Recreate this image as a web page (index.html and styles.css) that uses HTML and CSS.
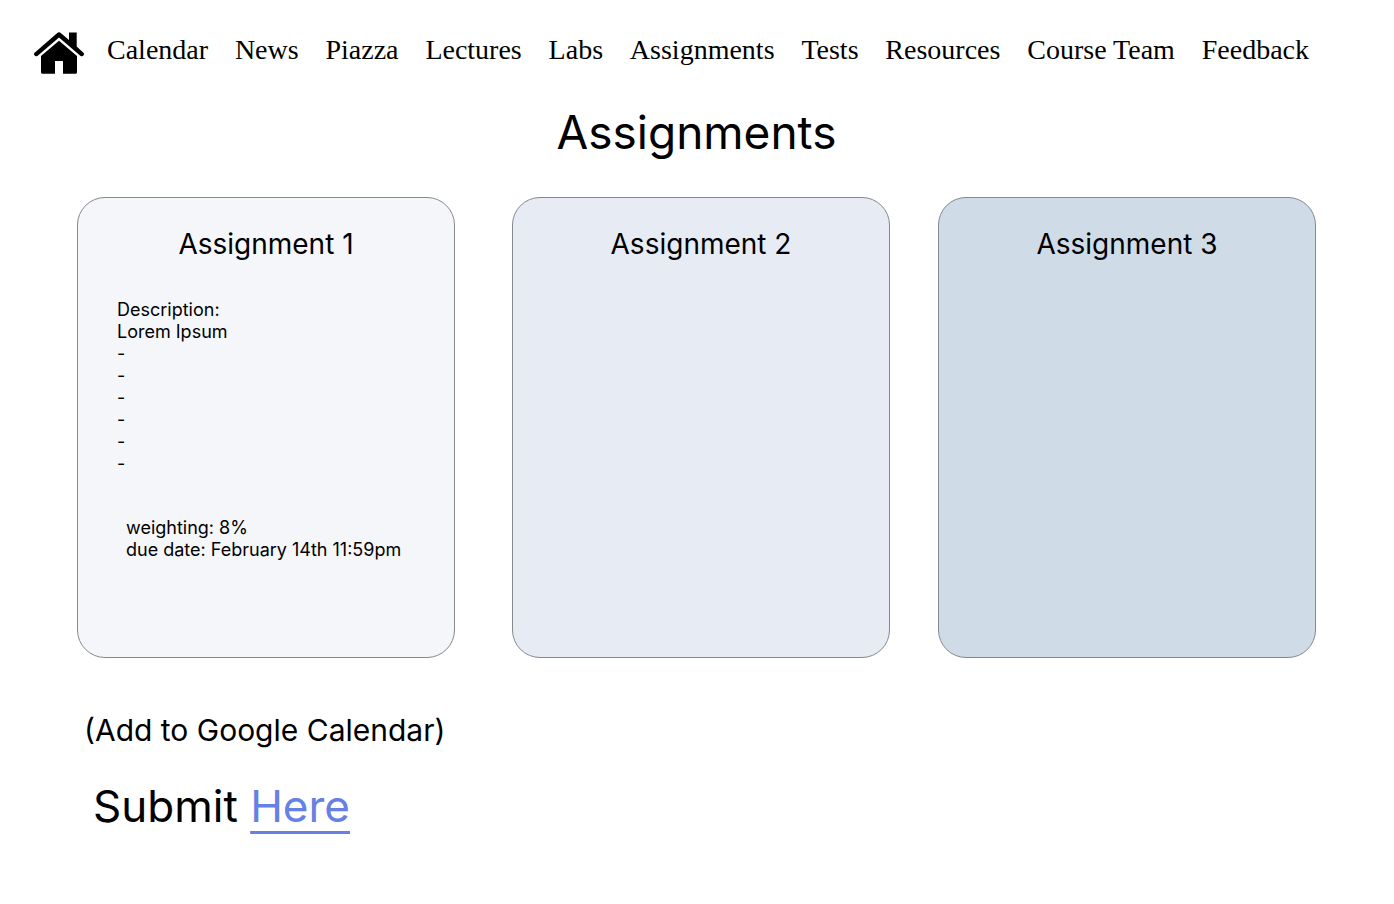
FILE: index.html
```html
<!DOCTYPE html>
<html lang="en">
<head>
<meta charset="utf-8">
<meta name="viewport" content="width=device-width, initial-scale=1">
<title>Assignments</title>
<link rel="stylesheet" href="styles.css">
</head>
<body>
<header class="site-header">
  <a class="home" href="#" aria-label="Home">
    <svg class="home-icon" viewBox="0 0 50 42" aria-hidden="true">
      <path d="M25 8.800 43 24v16.200q0 1.500-1.500 1.500H29V29h-8v12.700H8.500Q7 41.700 7 40.200V24z"/>
      <path d="M.600 20.800 23 1.200Q25-.600 27 1.200L35 8V.400h7.700v14.200l6.700 6.200q1.200 1.200.200 2.400-1.400 1.800-3 .700L25 5.600 3.400 23.900q-1.600 1.100-3-.700-1-1.200.200-2.400z"/>
    </svg>
  </a>
  <nav class="nav">
    <a href="#">Calendar</a>
    <a href="#">News</a>
    <a href="#">Piazza</a>
    <a href="#">Lectures</a>
    <a href="#">Labs</a>
    <a href="#">Assignments</a>
    <a href="#">Tests</a>
    <a href="#">Resources</a>
    <a href="#">Course Team</a>
    <a href="#">Feedback</a>
  </nav>
</header>
<main class="main">
  <h1 class="page-title">Assignments</h1>
  <div class="cards">
    <section class="card card-first">
      <h2 class="card-title">Assignment 1</h2>
      <div class="description">
        <p>Description:</p>
        <p>Lorem Ipsum</p>
        <p>-</p>
        <p>-</p>
        <p>-</p>
        <p>-</p>
        <p>-</p>
        <p>-</p>
      </div>
      <div class="details">
        <p>weighting: 8%</p>
        <p>due date: February 14th 11:59pm</p>
      </div>
    </section>
    <section class="card card-second">
      <h2 class="card-title">Assignment 2</h2>
    </section>
    <section class="card card-third">
      <h2 class="card-title">Assignment 3</h2>
    </section>
  </div>
  <p class="calendar-note">(Add to Google Calendar)</p>
  <p class="submit">Submit <a class="submit-link" href="#">Here</a></p>
</main>
</body>
</html>
```
FILE: styles.css
```css
* {
  box-sizing: border-box;
}

body {
  margin: 0;
  background: #fff;
  color: #000;
  font-family: Inter, sans-serif;
}

h1, h2, p {
  margin: 0;
  font-weight: 400;
}

.site-header {
  display: flex;
  align-items: center;
  gap: 23px;
  padding: 32px 85px 0 34px;
}

.home {
  display: flex;
}

.home-icon {
  width: 50px;
  height: 42px;
}

.nav {
  display: flex;
  flex: 1;
  justify-content: space-between;
  padding-bottom: 6px;
  font-family: "Liberation Serif", serif;
  font-size: 28px;
  line-height: 32px;
}

.nav a {
  color: inherit;
  text-decoration: none;
  white-space: nowrap;
}

.main {
  padding: 0 78px 64px 77px;
}

.page-title {
  margin-top: 28px;
  font-size: 46px;
  line-height: 60px;
  text-align: center;
}

.cards {
  display: flex;
  gap: 48px;
  margin-top: 35px;
}

.card {
  flex: 1;
  min-height: 461px;
  padding: 29px 39px;
  border: 1px solid #85888c;
  border-radius: 28px;
}

.card-first {
  margin-right: 9px;
  background: #f5f6fa;
}

.card-second {
  background: #e7ecf4;
}

.card-third {
  background: #cfdbe6;
}

.card-title {
  font-size: 28px;
  line-height: 34px;
  text-align: center;
}

.description,
.details {
  font-size: 18px;
  line-height: 22px;
  white-space: nowrap;
}

.description {
  margin-top: 38px;
}

.details {
  margin-top: 42px;
  padding-left: 9px;
}

.calendar-note {
  margin-top: 54px;
  padding-left: 7px;
  font-size: 30px;
  line-height: 36px;
}

.submit {
  margin-top: 31px;
  padding-left: 16px;
  font-size: 44px;
  line-height: 54px;
}

.submit-link {
  color: #6680e5;
  text-decoration: underline;
  text-decoration-thickness: 3px;
  text-underline-offset: 9px;
}
```
